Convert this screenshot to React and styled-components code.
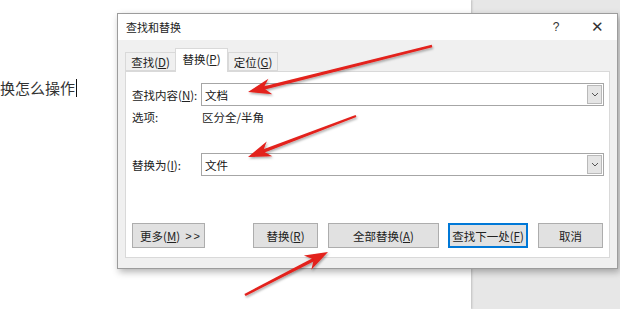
import React from "react";
import styled, { createGlobalStyle } from "styled-components";

const GlobalStyle = createGlobalStyle`
  html, body { margin: 0; padding: 0; background: #fff; }
  body { font-family: "Noto Sans CJK SC", "Noto Sans", sans-serif; }
  * { box-sizing: border-box; }
`;

const Screen = styled.div`
  position: relative;
  width: 620px;
  height: 309px;
  display: flex;
  overflow: hidden;
`;

const DocPage = styled.div`
  width: 471px;
  height: 100%;
  background: #fff;
  box-shadow: 1px 0 2px rgba(0, 0, 0, 0.18);
  padding-top: 77px;
  position: relative;
  z-index: 1;
`;

const DocText = styled.div`
  font-size: 15px;
  line-height: 22px;
  color: #333;
  display: flex;
  align-items: center;
`;

const Caret = styled.span`
  display: inline-block;
  width: 1px;
  height: 18px;
  background: #111;
  margin-left: 1px;
`;

const Desk = styled.div`
  flex: 1;
  background: #e7e7e7;
`;

const Dialog = styled.div`
  position: absolute;
  left: 117px;
  top: 13px;
  width: 501px;
  height: 256px;
  background: #f0f0f0;
  border: 1px solid #9c9c9c;
  box-shadow: 2px 3px 7px rgba(0, 0, 0, 0.3);
  z-index: 2;
  display: flex;
  flex-direction: column;
`;

const TitleBar = styled.div`
  height: 26px;
  background: #fff;
  display: flex;
  align-items: center;
  padding-left: 8px;
  font-size: 11px;
  color: #222;
`;

const Title = styled.div`
  flex: 1;
`;

const TitleBtn = styled.div`
  width: ${(p) => p.$w}px;
  text-align: center;
  font-family: "Liberation Sans", sans-serif;
  font-size: ${(p) => p.$size}px;
  color: #333;
`;

const Body = styled.div`
  flex: 1;
  padding: 0 7px 0 7px;
  display: flex;
  flex-direction: column;
`;

const TabRow = styled.div`
  height: 31px;
  display: flex;
  align-items: flex-end;
  position: relative;
  z-index: 1;
`;

const Tab = styled.div`
  width: ${(p) => p.$w}px;
  height: ${(p) => (p.$active ? 24 : 19)}px;
  margin-bottom: ${(p) => (p.$active ? -1 : 0)}px;
  background: ${(p) => (p.$active ? "#fff" : "#f0f0f0")};
  border: 1px solid #d9d9d9;
  border-bottom: ${(p) => (p.$active ? "none" : "1px solid #d9d9d9")};
  margin-left: ${(p) => (p.$active ? -1 : 0)}px;
  display: flex;
  align-items: center;
  justify-content: center;
  font-size: 11.5px;
  color: #222;
  padding-bottom: ${(p) => (p.$active ? 3 : 0)}px;
`;

const Panel = styled.div`
  height: 187px;
  background: #fff;
  border: 1px solid #d9d9d9;
  padding: 11px 5px 0 6px;
  display: flex;
  flex-direction: column;
`;

const FieldRow = styled.div`
  display: grid;
  grid-template-columns: 69px 1fr;
  align-items: center;
  margin-top: ${(p) => p.$mt || 0}px;
  font-size: 11.5px;
  color: #222;
`;

const Combo = styled.div`
  height: 23px;
  border: 1px solid #a6a6a6;
  display: flex;
  align-items: center;
  padding: 1px;
  background: #fff;
`;

const ComboText = styled.div`
  flex: 1;
  padding-left: 2px;
  font-size: 11.5px;
  color: #111;
`;

const DropBtn = styled.div`
  width: 15px;
  height: 100%;
  background: #e5e5e5;
  border: 1px solid #b9b9b9;
  display: flex;
  align-items: center;
  justify-content: center;
`;

const OptionRow = styled.div`
  display: grid;
  grid-template-columns: 70px 1fr;
  height: 14px;
  line-height: 14px;
  margin-top: 4px;
  font-size: 11.5px;
  color: #222;
`;

const ButtonRow = styled.div`
  margin-top: 47px;
  margin-right: 1px;
  display: flex;
  align-items: center;
`;

const Spacer = styled.div`
  flex: 1;
`;

const Btn = styled.div`
  width: ${(p) => p.$w}px;
  height: 25px;
  margin-left: ${(p) => p.$ml || 0}px;
  background: #e1e1e1;
  border: 1px solid ${(p) => (p.$default ? "#0078d7" : "#adadad")};
  box-shadow: ${(p) => (p.$default ? "inset 0 0 0 1px #0078d7" : "none")};
  display: flex;
  align-items: center;
  justify-content: ${(p) => (p.$left ? "flex-start" : "center")};
  padding-left: ${(p) => (p.$left ? 7 : 0)}px;
  font-size: 11.5px;
  color: #222;
  white-space: nowrap;
`;

const MoreMarks = styled.span`
  margin-left: 5px;
  letter-spacing: 2px;
  font-family: "Liberation Sans", sans-serif;
  font-size: 11px;
`;

const Arrows = styled.svg`
  position: absolute;
  left: 0;
  top: 0;
  z-index: 3;
  pointer-events: none;
`;

function arrowShapes(x1, y1, x2, y2) {
  const dx = x2 - x1;
  const dy = y2 - y1;
  const L = Math.hypot(dx, dy);
  const ux = dx / L;
  const uy = dy / L;
  const nx = -uy;
  const ny = ux;
  const headLen = 21;
  const headW = 8;
  const bx = x2 - ux * headLen;
  const by = y2 - uy * headLen;
  const t = 1.2;
  const s = 1.7;
  const shaft = [
    [x1 + nx * t, y1 + ny * t],
    [bx + ux * 6 + nx * s, by + uy * 6 + ny * s],
    [bx + ux * 6 - nx * s, by + uy * 6 - ny * s],
    [x1 - nx * t, y1 - ny * t],
  ];
  const head = [
    [x2, y2],
    [bx + nx * headW - ux * 2, by + ny * headW - uy * 2],
    [bx + ux * 5, by + uy * 5],
    [bx - nx * headW - ux * 2, by - ny * headW - uy * 2],
  ];
  const f = (pts) => pts.map((p) => p.map((v) => v.toFixed(1)).join(",")).join(" ");
  return { shaft: f(shaft), head: f(head) };
}

const arrows = [
  [432, 46, 248, 92],
  [356, 116, 248, 157],
  [245, 295, 328, 252],
];

function Chevron() {
  return (
    <svg width="8" height="5" viewBox="0 0 8 5">
      <path d="M1 1 L4 4 L7 1" fill="none" stroke="#555" strokeWidth="1" />
    </svg>
  );
}

export default function App() {
  return (
    <>
      <GlobalStyle />
      <Screen>
        <DocPage>
          <DocText>
            换怎么操作
            <Caret />
          </DocText>
        </DocPage>
        <Desk />
        <Dialog>
          <TitleBar>
            <Title>查找和替换</Title>
            <TitleBtn $w={42} $size={12}>?</TitleBtn>
            <TitleBtn $w={40} $size={15}>✕</TitleBtn>
          </TitleBar>
          <Body>
            <TabRow>
              <Tab $w={51}>
                查找(<u>D</u>)
              </Tab>
              <Tab $w={53} $active>
                替换(<u>P</u>)
              </Tab>
              <Tab $w={50}>
                定位(<u>G</u>)
              </Tab>
            </TabRow>
            <Panel>
              <FieldRow>
                <span>
                  查找内容(<u>N</u>):
                </span>
                <Combo>
                  <ComboText>文档</ComboText>
                  <DropBtn>
                    <Chevron />
                  </DropBtn>
                </Combo>
              </FieldRow>
              <OptionRow>
                <span>选项:</span>
                <span>区分全/半角</span>
              </OptionRow>
              <FieldRow $mt={29}>
                <span>
                  替换为(<u>I</u>):
                </span>
                <Combo>
                  <ComboText>文件</ComboText>
                  <DropBtn>
                    <Chevron />
                  </DropBtn>
                </Combo>
              </FieldRow>
              <ButtonRow>
                <Btn $w={73} $left>
                  更多(<u>M</u>)<MoreMarks>&gt;&gt;</MoreMarks>
                </Btn>
                <Spacer />
                <Btn $w={65}>
                  替换(<u>R</u>)
                </Btn>
                <Btn $w={111} $ml={10}>
                  全部替换(<u>A</u>)
                </Btn>
                <Btn $w={80} $ml={9} $default>
                  查找下一处(<u>F</u>)
                </Btn>
                <Btn $w={65} $ml={10}>
                  取消
                </Btn>
              </ButtonRow>
            </Panel>
          </Body>
        </Dialog>
        <Arrows width="620" height="309" viewBox="0 0 620 309">
          <defs>
            <filter id="sh" x="-20%" y="-20%" width="140%" height="140%">
              <feDropShadow dx="1" dy="1.5" stdDeviation="1.2" floodColor="#000" floodOpacity="0.35" />
            </filter>
          </defs>
          {arrows.map((a, i) => {
            const s = arrowShapes(...a);
            return (
              <g key={i} fill="#e3201b" filter="url(#sh)">
                <polygon points={s.shaft} />
                <polygon points={s.head} />
              </g>
            );
          })}
        </Arrows>
      </Screen>
    </>
  );
}
